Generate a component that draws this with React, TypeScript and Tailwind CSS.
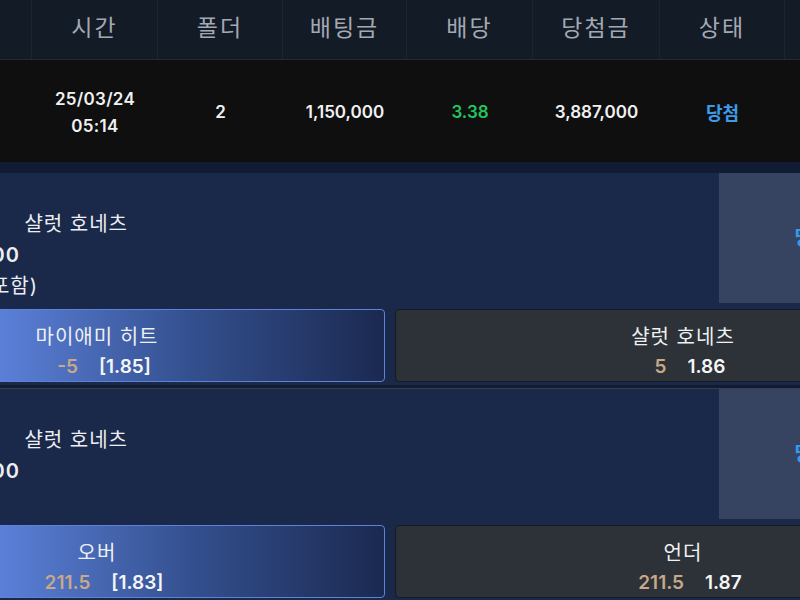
import React from "react";

const font = { fontFamily: "Inter, 'Noto Sans CJK KR', sans-serif" };

const cols = [
  { w: "w-[126px]", head: "시간" },
  { w: "w-[125px]", head: "폴더" },
  { w: "w-[124px]", head: "배팅금" },
  { w: "w-[126px]", head: "배당" },
  { w: "w-[127px]", head: "당첨금" },
  { w: "w-[125px]", head: "상태" },
];

function BetButton({
  name,
  line,
  odds,
  selected,
}: {
  name: string;
  line: string;
  odds: string;
  selected?: boolean;
}) {
  return (
    <div
      className={
        selected
          ? "flex-1 h-[73px] rounded-[4px] border border-[#5d82da] bg-[linear-gradient(90deg,#86a8f8_0%,#5b80d8_33%,#34508f_66%,#1b2950_100%)] flex flex-col items-center pt-[13px]"
          : "flex-1 h-[73px] rounded-[4px] border border-[#16191e] bg-[#2c3237] flex flex-col items-center pt-[13px]"
      }
    >
      <div className="text-[20px] tracking-[1px] leading-[28px] text-[#eef0f3]">{name}</div>
      <div className="mt-[2px] pl-[14px] flex items-center gap-[21px] text-[19px] leading-[28px] font-semibold">
        <span className="text-[#c7a888]">{line}</span>
        <span className="text-[#f4f5f7]">{odds}</span>
      </div>
    </div>
  );
}

type Line = { pre?: string; text: string; w: string; bold?: boolean };

function Panel({
  lines,
  left,
  right,
  withTop,
}: {
  lines: Line[];
  left: { name: string; line: string; odds: string };
  right: { name: string; line: string; odds: string };
  withTop?: boolean;
}) {
  return (
    <div
      className={
        withTop
          ? "bg-[#1a2849] pb-[3px] border-t border-[#363e4d]"
          : "bg-[#1a2849] pb-[3px]"
      }
    >
      <div className="flex h-[130px]">
        <div className="flex-1 flex flex-col pt-[36px]">
          {lines.map((l, i) => (
            <div
              key={i}
              className={`${l.w} flex justify-end gap-[48px] whitespace-nowrap text-[20px] tracking-[1px] leading-[31px] text-[#eceef2] ${
                l.bold ? "font-semibold" : ""
              }`}
            >
              {l.pre ? <span>{l.pre}</span> : null}
              <span>{l.text}</span>
            </div>
          ))}
        </div>
        <div className="w-[188px] mr-[73px] bg-[#364462] flex items-center justify-center">
          <span className="text-[20px] font-bold text-[#2f9cf2]">당첨</span>
        </div>
      </div>
      <div className="flex gap-[10px] px-[9px] mt-[6px]">
        <BetButton {...left} selected />
        <BetButton {...right} />
      </div>
    </div>
  );
}

export default function App() {
  return (
    <div className="w-[800px] h-[600px] overflow-hidden bg-[#0f172b]" style={font}>
      <div className="w-[1180px] -ml-[200px]">
        {/* header */}
        <div className="flex h-[60px] bg-[#131b27] border-b border-[#272b31]">
          <div className="w-[232px] border-r border-[#1b2431]" />
          {cols.map((c) => (
            <div
              key={c.head}
              className={`${c.w} border-r border-[#1b2431] flex items-center justify-center pb-[2px] text-[23px] tracking-[2px] text-[#a3a9b2]`}
            >
              {c.head}
            </div>
          ))}
          <div className="flex-1" />
        </div>
        {/* data row */}
        <div className="flex h-[102px] pt-[4px] bg-[#0f0f10] text-[17px] font-semibold text-[#f1f1f1]">
          <div className="w-[232px]" />
          <div className={`${cols[0].w} flex flex-col items-center justify-center leading-[27px] tracking-[0.3px]`}>
            <span>25/03/24</span>
            <span>05:14</span>
          </div>
          <div className={`${cols[1].w} flex items-center justify-center`}>2</div>
          <div className={`${cols[2].w} flex items-center justify-center`}>1,150,000</div>
          <div className={`${cols[3].w} flex items-center justify-center text-[#22c55e]`}>3.38</div>
          <div className={`${cols[4].w} flex items-center justify-center`}>3,887,000</div>
          <div className={`${cols[5].w} flex items-center justify-center text-[#3d9be9] font-bold text-[18px]`}>당첨</div>
          <div className="flex-1" />
        </div>
        {/* details */}
        <div className="pt-[11px] bg-[#111b33] flex flex-col gap-[3px]">
          <Panel
            lines={[
              { pre: "마이애미 히트", text: "샬럿 호네츠", w: "w-[328px]" },
              { text: "배팅금 1,150,000", w: "w-[220px]", bold: true },
              { text: "핸디캡 (연장포함)", w: "w-[238px]" },
            ]}
            left={{ name: "마이애미 히트", line: "-5", odds: "[1.85]" }}
            right={{ name: "샬럿 호네츠", line: "5", odds: "1.86" }}
          />
          <Panel
            withTop
            lines={[
              { pre: "마이애미 히트", text: "샬럿 호네츠", w: "w-[328px]" },
              { text: "배팅금 1,150,000", w: "w-[220px]", bold: true },
            ]}
            left={{ name: "오버", line: "211.5", odds: "[1.83]" }}
            right={{ name: "언더", line: "211.5", odds: "1.87" }}
          />
        </div>
      </div>
    </div>
  );
}
